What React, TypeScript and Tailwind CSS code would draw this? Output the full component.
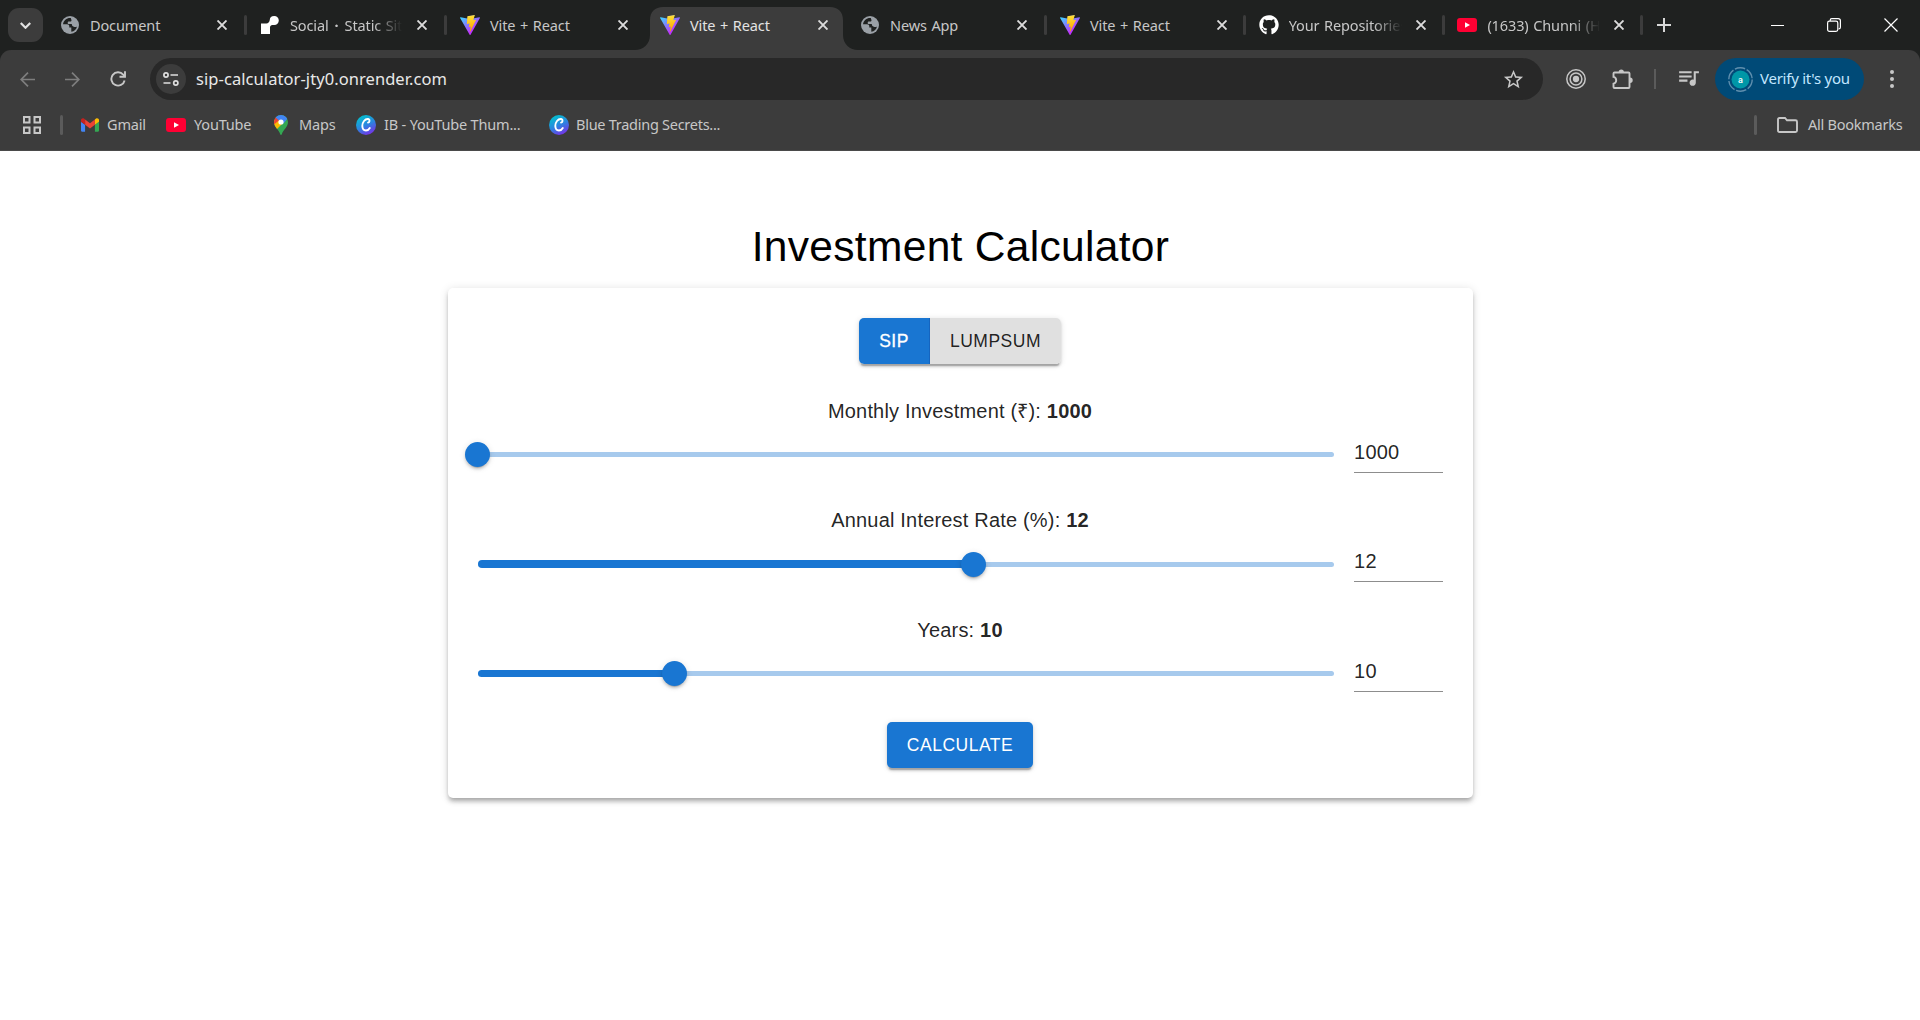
import React from "react";
import { FaGithub } from "react-icons/fa";
import { MdQueueMusic, MdStarBorder } from "react-icons/md";

function Globe() {
  return (
    <svg viewBox="0 0 18 18" className="h-[18px] w-[18px]">
      <circle cx="9" cy="9" r="9" fill="#9aa0a6" />
      <path
        d="M9.800 2C6 1.600 2.500 4.300 2 8.200l4 .1c1.500 0 2.300.9 2.300 2.200v1h2v4.300c3-.4 5.200-2.300 5.700-5.300-.8.600-2 .6-3.200.3-1.500-.4-1.900-1.400-2-2.700H7.900c-.8 0-1.200-.5-1.200-1.200 0-.8.5-1.300 1.200-1.300h1.300c.9 0 1.300-.5 1.300-1.300z"
        fill="#1f2120"
      />
    </svg>
  );
}

function RenderLogo() {
  return (
    <svg viewBox="0 0 18 18" className="h-[18px] w-[18px]" fill="#fff">
      <path d="M13.200 0a4.500 4.500 0 0 0-4.500 4.200C8.500 6 7.100 7.300 5.400 7.500H0V18h9v-6.500c0-1.400 1-2.500 2.400-2.500h1.900a4.500 4.500 0 0 0 0-9z" />
    </svg>
  );
}

function ViteLogo({ id }: { id: string }) {
  return (
    <svg viewBox="0 0 256 257" className="h-5 w-5">
      <defs>
        <linearGradient id={id + "a"} x1="-.828%" x2="57.636%" y1="7.652%" y2="78.411%">
          <stop offset="0%" stopColor="#41D1FF" />
          <stop offset="100%" stopColor="#BD34FE" />
        </linearGradient>
        <linearGradient id={id + "b"} x1="43.376%" x2="50.316%" y1="2.242%" y2="89.03%">
          <stop offset="0%" stopColor="#FFEA83" />
          <stop offset="8.333%" stopColor="#FFDD35" />
          <stop offset="100%" stopColor="#FFA800" />
        </linearGradient>
      </defs>
      <path
        fill={`url(#${id}a)`}
        d="M255.153 37.938L134.897 252.976c-2.483 4.440-8.862 4.466-11.382.048L.875 37.958c-2.746-4.814 1.371-10.646 6.827-9.670l120.385 21.517a6.537 6.537 0 0 0 2.322-.004l117.867-21.483c5.438-.991 9.574 4.796 6.877 9.620Z"
      />
      <path
        fill={`url(#${id}b)`}
        d="M185.432.063L96.440 17.501a3.268 3.268 0 0 0-2.634 3.014l-5.474 92.456a3.268 3.268 0 0 0 3.997 3.378l24.777-5.718c2.318-.535 4.413 1.507 3.936 3.838l-7.361 36.047c-.495 2.426 1.782 4.500 4.151 3.780l15.304-4.649c2.372-.720 4.652 1.360 4.150 3.788l-11.698 56.621c-.732 3.542 3.979 5.473 5.943 2.437l1.313-2.028l72.516-144.720c1.215-2.423-.880-5.186-3.540-4.672l-25.505 4.922c-2.396.462-4.435-1.770-3.759-4.114l16.646-57.705c.677-2.350-1.370-4.583-3.769-4.113Z"
      />
    </svg>
  );
}

function YouTubeLogo() {
  return (
    <svg viewBox="0 0 20 14" className="h-[14px] w-5">
      <rect width="20" height="14" rx="3" fill="#ff0033" />
      <path d="M8 4.200v5.600L13 7z" fill="#fff" />
    </svg>
  );
}

function GmailLogo() {
  return (
    <svg viewBox="52 42 88 66" className="h-[14px] w-[18px]">
      <path fill="#4285f4" d="M58 108h14V74L52 59v43c0 3.320 2.690 6 6 6" />
      <path fill="#34a853" d="M120 108h14c3.320 0 6-2.690 6-6V59l-20 15" />
      <path fill="#fbbc04" d="M120 48v26l20-15v-8c0-7.420-8.470-11.650-14.400-7.200" />
      <path fill="#ea4335" d="M72 74V48l24 18 24-18v26L96 92" />
      <path fill="#c5221f" d="M52 51v8l20 15V48l-5.600-4.200c-5.940-4.450-14.400-.220-14.400 7.200" />
    </svg>
  );
}

function MapsLogo() {
  return (
    <svg viewBox="0 0 14 20" className="h-5 w-[14px]">
      <defs>
        <clipPath id="pin">
          <path d="M7 0a7 7 0 0 0-7 7c0 2.500 1 4.300 2.500 6.200C4.200 15.300 5.700 17 6.200 19.200c.2 1 1.400 1 1.600 0 .5-2.200 2-3.900 3.700-6C13 11.300 14 9.500 14 7a7 7 0 0 0-7-7z" />
        </clipPath>
      </defs>
      <g clipPath="url(#pin)">
        <rect width="14" height="20" fill="#34a853" />
        <path d="M0 5l5-.5L8 9l-6 6-2-3z" fill="#fbbc04" />
        <path d="M1 1.500L5.500 5 0 9.500V3z" fill="#ea4335" />
        <path d="M3 0h11v3L9.500 8.500 4.500 5 1.500 2.500z" fill="#4285f4" />
      </g>
      <circle cx="7" cy="7" r="2.600" fill="#fff" />
    </svg>
  );
}

function CanvaLogo({ id }: { id: string }) {
  return (
    <svg viewBox="0 0 20 20" className="h-5 w-5">
      <defs>
        <linearGradient id={id} x1=".25" y1="0" x2=".75" y2="1">
          <stop offset="0" stopColor="#00c4cc" />
          <stop offset=".5" stopColor="#2a86e0" />
          <stop offset="1" stopColor="#7d2ae8" />
        </linearGradient>
      </defs>
      <circle cx="10" cy="10" r="10" fill={`url(#${id})`} />
      <path
        d="M12 7.600c1.800-.4 2.200-3.200.2-3.600C9 3.500 6.200 7.500 6.300 11c.1 2.800 1.600 4.500 3.600 4.500 1.700 0 3-.9 3.900-2.500"
        fill="none"
        stroke="#fff"
        strokeWidth="1.900"
        strokeLinecap="round"
      />
    </svg>
  );
}

function Cross({ className }: { className: string }) {
  return (
    <svg viewBox="0 0 10 10" className={className} fill="none" stroke="currentColor" strokeWidth="1.900">
      <path d="M.5.500l9 9M9.500.500l-9 9" />
    </svg>
  );
}

const tabs = [
  { title: "Document", icon: <Globe />, line: true },
  { title: "Social\u2009\u200a·\u2009\u200aStatic Sit", icon: <RenderLogo />, line: true, fade: true, dotted: true },
  { title: "Vite + React", icon: <ViteLogo id="v1" />, line: false },
  { title: "Vite + React", icon: <ViteLogo id="v2" />, line: false, active: true },
  { title: "News App", icon: <Globe />, line: true },
  { title: "Vite + React", icon: <ViteLogo id="v3" />, line: true, narrow: true },
  { title: "Your Repositories", icon: <FaGithub className="h-5 w-5 text-white" />, line: true, narrow: true, fade: true },
  { title: "(1633) Chunni (H", icon: <YouTubeLogo />, line: true, narrow: true, fade: true },
];

function TabTitle({ tab }: { tab: (typeof tabs)[number] }) {
  if (!tab.dotted) return <>{tab.title}</>;
  return (
    <>
      Social<span className="mx-[6px] font-bold">·</span>Static Sit
    </>
  );
}

function TabStrip() {
  return (
    <div className="flex h-[50px] items-center bg-[#1f2120] pl-2 text-[#c7c7c7]">
      <div className="mr-1 flex h-[34px] w-[35px] items-center justify-center rounded-[11px] bg-[#3c3c3c]">
        <svg viewBox="0 0 10 6" className="h-[7px] w-[11px]" fill="none" stroke="#e3e3e3" strokeWidth="2">
          <path d="M.7.700L5 5 9.300.700" />
        </svg>
      </div>
      {tabs.map((tab, i) => (
        <div
          key={i}
          className={"relative flex h-[50px] shrink-0 items-center pl-[13px] " + (tab.narrow ? "w-[198.700px]" : "w-[200px]")}
        >
          {tab.active && (
            <svg viewBox="0 0 223 43" className="absolute bottom-0 left-[-12px] h-[43px] w-[223px]" fill="#3c3c3c">
              <path d="M0 43c8 0 15-6 15-15V13C15 5 20 0 28 0h167c8 0 13 5 13 13v15c0 9 7 15 15 15z" />
            </svg>
          )}
          <span className="relative flex w-5 shrink-0 justify-center">{tab.icon}</span>
          <span
            className={
              "relative ml-[10px] w-[113px] pt-px whitespace-nowrap text-[14.500px] tracking-[-0.120px] [word-spacing:1px] " +
              (tab.fade ? "[mask-image:linear-gradient(to_right,black_75%,transparent)] " : "") +
              (tab.active ? "text-[#e3e3e3]" : "")
            }
          >
            <TabTitle tab={tab} />
          </span>
          <Cross
            className={"relative h-[10px] w-[10px] shrink-0 text-[#dcdcdc] " + (tab.narrow ? "ml-[14px]" : "ml-[15px]")}
          />
          {tab.line && (
            <span
              className={
                "h-5 w-[3px] shrink-0 rounded-full bg-[#3c3c3c] " + (tab.narrow ? "ml-[16px]" : "ml-[17px]")
              }
            />
          )}
        </div>
      ))}
      <svg viewBox="0 0 14 14" className="ml-[14px] h-[14px] w-[14px]" stroke="#d8d8d8" strokeWidth="2">
        <path d="M7 0v14M0 7h14" />
      </svg>
      <div className="ml-auto flex items-center gap-[43px] pr-[22px]">
        <span className="h-px w-[13px] bg-white" />
        <svg viewBox="0 0 14 14" className="h-[14px] w-[14px]" fill="none" stroke="#fff" strokeWidth="1.200">
          <rect x=".6" y="3.200" width="10.200" height="10.200" rx="1.800" />
          <path d="M3.200 3V2.200C3.200 1.200 4 .6 4.800.6h6.400c1.200 0 2.200 1 2.200 2.200v6.500c0 .9-.7 1.600-1.800 1.600" />
        </svg>
        <svg viewBox="0 0 14 14" className="h-[14px] w-[14px]" stroke="#fff" strokeWidth="1.200">
          <path d="M.5.500l13 13M13.500.500l-13 13" />
        </svg>
      </div>
    </div>
  );
}

function Toolbar() {
  return (
    <div className="bg-[#1f2120]">
      <div className="flex h-[58px] items-center rounded-t-[11px] bg-[#3c3c3c] pl-5">
        <svg viewBox="0 0 15 15" className="h-[15px] w-[15px]" fill="none" stroke="#7e7e7e" strokeWidth="1.700">
          <path d="M15 7.500H1.200M8 .700L1.200 7.500 8 14.300" />
        </svg>
        <svg viewBox="0 0 15 15" className="ml-[30px] h-[15px] w-[15px]" fill="none" stroke="#7e7e7e" strokeWidth="1.700">
          <path d="M0 7.500h13.800M7 .700l6.800 6.800L7 14.300" />
        </svg>
        <svg viewBox="0 0 16 16" className="ml-[30px] h-4 w-4" fill="none" stroke="#c7c7c7" strokeWidth="1.900">
          <path d="M14.600 9.500A6.700 6.700 0 1 1 13.200 3.600L14.800 5.500" />
          <path d="M15 .3v5.400H9.500" />
        </svg>
        <div className="ml-6 flex h-[42px] w-[1393px] items-center rounded-full bg-[#282828] pl-[6px]">
          <div className="flex h-[30px] w-[30px] items-center justify-center rounded-full bg-[#3c3c3c]">
            <svg viewBox="0 0 16 14" className="h-[14px] w-4" fill="none" stroke="#dedede" strokeWidth="1.700">
              <circle cx="3" cy="3" r="2.100" />
              <path d="M7.500 3H15M.5 11h7" />
              <circle cx="12.800" cy="11" r="2.100" />
            </svg>
          </div>
          <span className="ml-[10px] pt-px text-[16.500px] tracking-[0.070px] text-[#e8e8e8]">
            sip-calculator-jty0.onrender.com
          </span>
          <MdStarBorder className="ml-auto mr-[18px] h-[23px] w-[23px] text-[#c7c7c7]" />
        </div>
        <svg viewBox="0 0 20 20" className="ml-[23px] h-5 w-5" fill="none" stroke="#c7c7c7" strokeWidth="1.500">
          <circle cx="10" cy="10" r="9.200" />
          <circle cx="10" cy="10" r="5.900" />
          <circle cx="10" cy="10" r="2.400" fill="#c7c7c7" />
        </svg>
        <svg viewBox="0 0 21 21" className="ml-[26px] h-[21px] w-[21px]" fill="none">
          <path
            d="M2.500 3.500H16.500c.6 0 1 .4 1 1V18c0 .6-.4 1-1 1H2.500c-.6 0-1-.4-1-1v-3.300c3.600-.8 3.600-6 0-6.800V4.500c0-.6.4-1 1-1z"
            stroke="#c7c7c7"
            strokeWidth="1.900"
          />
          <path d="M6.700 3a2.600 2.600 0 0 1 5.200 0zM18 8.500a2.700 2.700 0 0 1 0 5.400z" fill="#c7c7c7" />
        </svg>
        <span className="ml-[21px] h-5 w-[2px] bg-[#5b5b5b]" />
        <MdQueueMusic className="mb-[3px] ml-[20px] h-[25px] w-[25px] text-[#c7c7c7]" />
        <div className="ml-[14px] flex h-[42px] w-[149px] items-center rounded-full bg-[#004a77] pl-[13px]">
          <svg viewBox="0 0 25 25" className="h-[25px] w-[25px]">
            <circle cx="12.500" cy="12.500" r="11.700" fill="none" stroke="#5f8fae" strokeWidth="1.400" strokeDasharray="10.500 1.750" />
            <circle cx="12.500" cy="12.500" r="9" fill="#0097a7" />
            <text x="12.500" y="15.500" textAnchor="middle" fontSize="9" fontWeight="500" fontFamily="Roboto" fill="#fff">a</text>
          </svg>
          <span className="ml-[7px] pb-px whitespace-nowrap text-[15px] tracking-[-0.250px] text-[#c2e7ff]">Verify it's you</span>
        </div>
        <span className="ml-[26px] flex flex-col gap-[3px]">
          <i className="h-1 w-1 rounded-full bg-[#c7c7c7]" />
          <i className="h-1 w-1 rounded-full bg-[#c7c7c7]" />
          <i className="h-1 w-1 rounded-full bg-[#c7c7c7]" />
        </span>
      </div>
    </div>
  );
}

function Bookmarks() {
  return (
    <div className="flex h-[43px] items-center border-b border-[#4a4a4a] bg-[#3c3c3c] pb-[8px] pl-[23px] text-[14.500px] tracking-[-0.180px] whitespace-nowrap text-[#c7c7c7]">
      <svg viewBox="0 0 18 18" className="h-[18px] w-[18px]" fill="none" stroke="#c7c7c7" strokeWidth="2">
        <path d="M1 1h5.500v5.500H1zM11.500 1H17v5.500h-5.500zM1 11.500h5.500V17H1zM11.500 11.500H17V17h-5.500z" />
      </svg>
      <span className="ml-[19px] h-5 w-[3px] rounded-full bg-[#5b5b5b]" />
      <span className="ml-[18px] flex w-[85px] items-center gap-2"><GmailLogo />Gmail</span>
      <span className="flex w-[108px] items-center gap-2"><YouTubeLogo />YouTube</span>
      <span className="flex w-[82px] items-center gap-[11px]"><MapsLogo />Maps</span>
      <span className="flex w-[193px] items-center gap-2"><CanvaLogo id="c1" />IB - YouTube Thum...</span>
      <span className="flex items-center gap-[7px] tracking-[-0.270px]"><CanvaLogo id="c2" />Blue Trading Secrets...</span>
      <span className="mr-5 ml-auto h-5 w-[3px] rounded-full bg-[#5b5b5b]" />
      <svg viewBox="0 0 21 16" className="mr-[10px] h-4 w-[21px]" fill="none" stroke="#c7c7c7" strokeWidth="1.900">
        <path d="M1 2.500C1 1.500 1.500 1 2.500 1H8l2 2.300h8.500c1 0 1.500.5 1.500 1.500v8.700c0 1-.5 1.500-1.500 1.500h-16C1.500 15 1 14.500 1 13.500z" />
      </svg>
      <span className="w-[112px] tracking-[-0.250px]">All Bookmarks</span>
    </div>
  );
}

function SliderField({ label, value, percent }: { label: string; value: number; percent: number }) {
  return (
    <div className="h-[77.500px] text-[20px] tracking-[0.00938em] text-black/87">
      <p className="text-center leading-[30px]">
        {label}: <b>{value}</b>
      </p>
      <div className="mt-[6.800px] flex h-10 gap-5">
        <div className="relative mt-[19.500px] h-[5px] w-[856px] rounded-full bg-[#a7caed]">
          <div
            className="absolute top-[-1.250px] left-0 h-[7.500px] rounded-full bg-[#1976d2]"
            style={{ width: `${percent}%` }}
          />
          <div
            className="absolute top-[-10px] -ml-[12.400px] h-[25px] w-[25px] rounded-full bg-[#1976d2] shadow-[0_4px_1px_-3px_rgba(0,0,0,0.2),0_2.500px_2.500px_rgba(0,0,0,0.14),0_1px_6px_rgba(0,0,0,0.12)]"
            style={{ left: `${percent}%` }}
          />
        </div>
        <input
          readOnly
          value={value}
          className="h-10 w-[89px] border-b border-[#8d8d8d] bg-transparent pt-[5px] pb-[5px] pl-[0.600px] tracking-[0.00938em] outline-none"
        />
      </div>
    </div>
  );
}

const raised =
  "shadow-[0_4px_1px_-2.500px_rgba(0,0,0,0.2),0_2.500px_2.500px_rgba(0,0,0,0.14),0_1px_6px_rgba(0,0,0,0.12)]";

function Calculator() {
  return (
    <main className="flex flex-col items-center pt-[70px] font-['Liberation_Sans',Arial,sans-serif]">
      <h1 className="pl-[1px] text-[42.500px] leading-[52.500px] tracking-[0.00735em] text-black">Investment Calculator</h1>
      <section className="mt-[14.500px] flex h-[510px] w-[1025px] flex-col items-center rounded-[5px] bg-white px-[30px] pt-[30px] shadow-[0_4px_4px_-2.500px_rgba(0,0,0,0.2),0_4px_5px_rgba(0,0,0,0.14),0_1px_10px_rgba(0,0,0,0.12)]">
        <div className={"flex h-[46px] rounded-[5px] text-[17.500px] tracking-[0.02857em] " + raised}>
          <button className="w-[71px] rounded-l-[5px] border-r border-[#1565c0] bg-[#1976d2] text-white [-webkit-text-stroke:0.3px_white]">
            SIP
          </button>
          <button className="w-[131px] rounded-r-[5px] bg-[#e0e0e0] text-black/87">LUMPSUM</button>
        </div>
        <div className="mt-8 flex w-full flex-col gap-[31.900px]">
          <SliderField label="Monthly Investment (₹)" value={1000} percent={0} />
          <SliderField label="Annual Interest Rate (%)" value={12} percent={57.9} />
          <SliderField label="Years" value={10} percent={23.05} />
        </div>
        <button className={"mt-[29.700px] h-[46px] w-[146px] shrink-0 rounded-[5px] bg-[#1976d2] text-[17.500px] tracking-[0.02857em] text-white " + raised}>
          CALCULATE
        </button>
      </section>
    </main>
  );
}

export default function App() {
  return (
    <div className="h-[1020px] w-[1920px] overflow-hidden bg-white font-['Noto_Sans','Open_Sans',sans-serif]">
      <TabStrip />
      <Toolbar />
      <Bookmarks />
      <Calculator />
    </div>
  );
}
